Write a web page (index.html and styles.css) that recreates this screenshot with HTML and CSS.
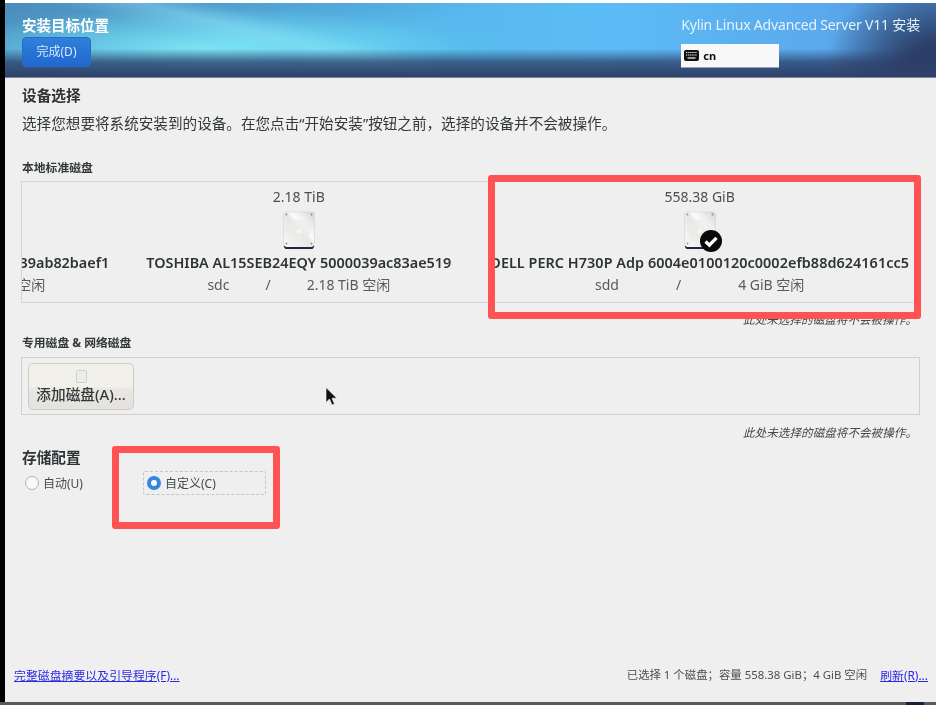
FILE: index.html
```html
<!DOCTYPE html>
<html lang="zh-CN">
<head>
<meta charset="utf-8">
<title>安装目标位置</title>
<link rel="stylesheet" href="styles.css">
</head>
<body>
<svg class="defs" width="0" height="0" aria-hidden="true">
  <defs>
    <linearGradient id="platter" x1="0" y1="1" x2="1" y2="0">
      <stop offset="0" stop-color="#fafaf9"/>
      <stop offset="0.5" stop-color="#e6e6e4"/>
      <stop offset="0.62" stop-color="#fbfbfa"/>
      <stop offset="1" stop-color="#d4d4d1"/>
    </linearGradient>
    <symbol id="disk" viewBox="0 0 32 38">
      <path d="M2 1h28l1.500 2v32.500l-1.500 2H2l-1.500-2V3z" fill="url(#platter)" stroke="#cfcfcc" stroke-width="0.500"/>
      <path d="M1 34.500l2 1.500h26l2-1.500v1.500l-1.500 2h-27L1 36z" fill="#25263d"/>
      <circle cx="16" cy="20" r="11.500" fill="#ebebe9" fill-opacity="0.700"/>
      <circle cx="16" cy="20" r="2.500" fill="#f6f6f5"/>
      <circle cx="3.500" cy="3.500" r="0.900" fill="#8c8c8c"/>
      <circle cx="28.500" cy="3.500" r="0.900" fill="#8c8c8c"/>
      <circle cx="3.500" cy="32.500" r="0.900" fill="#8c8c8c"/>
      <circle cx="28.500" cy="32.500" r="0.900" fill="#8c8c8c"/>
    </symbol>
  </defs>
</svg>
<div class="screen">
  <div class="edge"></div>
  <div class="window">
    <div class="topline"></div>
    <header class="banner">
      <div class="banner-left">
        <div class="banner-title">安装目标位置</div>
        <button class="done">完成(D)</button>
      </div>
      <div class="banner-right">
        <div class="product">Kylin Linux Advanced Server V11 安装</div>
        <div class="layout">
          <svg class="kbd" width="15" height="11" viewBox="0 0 15 11">
            <rect width="15" height="11" rx="2" fill="#111"/>
            <path d="M2 2.500h11M2 5h11" stroke="#f8f8f8" stroke-width="1.200" stroke-dasharray="1.300 .8"/>
            <path d="M3.500 8h8" stroke="#f8f8f8" stroke-width="1.200"/>
          </svg>
          <span>cn</span>
        </div>
      </div>
    </header>
    <main class="content">
      <h1 class="heading">设备选择</h1>
      <p class="desc">选择您想要将系统安装到的设备。在您点击“开始安装”按钮之前，选择的设备并不会被操作。</p>
      <h2 class="label first">本地标准磁盘</h2>
      <div class="disks">
        <div class="tile scrolled">
          <div class="size">2.18 TiB</div>
          <svg class="disk-icon"><use href="#disk"/></svg>
          <div class="name">TOSHIBA AL15SEB24EQY 50000039ab82baef1</div>
          <div class="info narrow"><span>sdb</span><span>/</span><span>2.18 TiB 空闲</span></div>
        </div>
        <div class="tile">
          <div class="size">2.18 TiB</div>
          <svg class="disk-icon"><use href="#disk"/></svg>
          <div class="name">TOSHIBA AL15SEB24EQY 5000039ac83ae519</div>
          <div class="info narrow"><span>sdc</span><span>/</span><span>2.18 TiB 空闲</span></div>
        </div>
        <div class="tile selected">
          <div class="size">558.38 GiB</div>
          <div class="icon-wrap">
            <svg class="disk-icon"><use href="#disk"/></svg>
            <svg class="check" width="22" height="22" viewBox="0 0 24 24">
              <circle cx="12" cy="12" r="12" fill="#0a0a0a"/>
              <path d="M6 12.500l4.200 4L18 8.500" fill="none" stroke="#fff" stroke-width="3.600"/>
            </svg>
          </div>
          <div class="name">DELL PERC H730P Adp 6004e0100120c0002efb88d624161cc5</div>
          <div class="info wide"><span>sdd</span><span>/</span><span>4 GiB 空闲</span></div>
        </div>
      </div>
      <div class="note">此处未选择的磁盘将不会被操作。</div>
      <h2 class="label second">专用磁盘 &amp; 网络磁盘</h2>
      <div class="special">
        <button class="add">
          <svg width="11" height="13" viewBox="0 0 11 13">
            <rect x="0.500" y="0.500" width="10" height="12" rx="1" fill="#ececea" stroke="#d0d0cc"/>
          </svg>
          <span>添加磁盘(A)...</span>
        </button>
      </div>
      <div class="note gap">此处未选择的磁盘将不会被操作。</div>
      <h1 class="heading storage">存储配置</h1>
      <div class="radios">
        <div class="radio"><span class="dot"></span>自动(U)</div>
        <div class="radio focus"><span class="dot on"></span>自定义(C)</div>
      </div>
    </main>
    <footer class="foot">
      <a class="link" href="#">完整磁盘摘要以及引导程序(F)...</a>
      <div class="summary">
        <span class="summary-text">已选择 1 个磁盘；容量 558.38 GiB；4 GiB 空闲</span>
        <a class="link" href="#">刷新(R)...</a>
      </div>
    </footer>
  </div>
  <div class="bottomline"><span class="taskmark"></span></div>
  <div class="mark mark-disk"></div>
  <div class="mark mark-radio"></div>
  <svg class="pointer" width="12" height="19" viewBox="0 0 12 19">
    <path d="M1 0.500v15l3.500-3.500 2.500 6 2.500-1-2.500-5.800h4.800z" fill="#111" stroke="#fff" stroke-width="0.600"/>
  </svg>
</div>
</body>
</html>
```
FILE: styles.css
```css
* { box-sizing: border-box; }
html, body { margin: 0; padding: 0; }
body {
  width: 936px;
  height: 705px;
  overflow: hidden;
  background: #efefef;
  font-family: "Noto Sans", "Noto Sans CJK SC", sans-serif;
  color: #2e3436;
}
.defs { position: absolute; }
.screen {
  position: relative;
  width: 936px;
  height: 705px;
  display: grid;
  grid-template-columns: 5px 1fr;
  grid-template-rows: 702px 3px;
}
.edge { background: #000; }
.window {
  display: flex;
  flex-direction: column;
  min-width: 0;
  background: #efefef;
  filter: blur(0.35px);
}
.topline { height: 3px; background: #fff; flex: none; }
.banner {
  flex: none;
  height: 75px;
  display: flex;
  justify-content: space-between;
  padding: 12px 16px 0 17px;
  border-bottom: 1px solid #7b8598;
  background:
    linear-gradient(180deg, rgba(44,62,104,0) 62%, rgba(44,62,104,.75) 80%, #2e4169 100%),
    radial-gradient(ellipse 110px 90px at 100% 85%, #2c3f68 25%, rgba(44,63,104,0) 100%),
    radial-gradient(ellipse 260px 40px at 200px 45px, rgba(130,235,248,.85), rgba(130,235,248,0) 100%),
    linear-gradient(194deg, rgba(150,225,250,0) 59%, rgba(150,225,250,.4) 65%, rgba(150,225,250,0) 72%),
    linear-gradient(165deg, rgba(72,118,170,.7) 0, rgba(72,118,170,0) 130px),
    linear-gradient(12deg, rgba(90,220,240,.4) 30%, rgba(90,220,240,0) 55%),
    linear-gradient(90deg, #4fa9dc 0, #56b7ea 40%, #5cbcf5 65%, #5aa9ec 88%, #4d8ccf 100%);
}
.banner-left, .banner-right { display: flex; flex-direction: column; align-items: flex-start; }
.banner-title {
  height: 20px;
  line-height: 20px;
  font-size: 14.500px;
  font-weight: 700;
  color: #fff;
}
.done {
  margin-top: 2px;
  width: 69px;
  height: 30px;
  padding: 0;
  border: 1px solid #2a6cc4;
  border-radius: 4px;
  background: linear-gradient(180deg, #2f80dc, #2068d0);
  color: #d6e8fb;
  font: 400 12px/1 "Noto Sans", "Noto Sans CJK SC", sans-serif;
}
.product {
  height: 20px;
  line-height: 20px;
  font-size: 14px;
  letter-spacing: -0.170px;
  color: #e6f3fc;
  white-space: nowrap;
}
.layout {
  margin-top: 9px;
  width: 98px;
  height: 24px;
  display: flex;
  align-items: center;
  gap: 4px;
  padding-left: 3px;
  background: #f8f8f8;
  border-bottom: 1px solid #9aa3b4;
  font-size: 11px;
  font-weight: 700;
  color: #111;
}
.content {
  flex: 1;
  display: flex;
  flex-direction: column;
  padding: 7px 16px 0 17px;
  min-height: 0;
}
.heading {
  margin: 0;
  height: 20px;
  line-height: 20px;
  font-size: 14.670px;
  font-weight: 700;
  color: #2e3436;
}
.desc {
  margin: 8px 0 0;
  height: 20px;
  line-height: 20px;
  font-size: 14.600px;
  color: #33383a;
  white-space: nowrap;
}
.label {
  margin: 7px 0 0;
  height: 16px;
  line-height: 16px;
  font-size: 11.800px;
  font-weight: 700;
  color: #33383a;
}
.label.first { margin-top: 26px; }
.label.second { margin-top: 6px; }
.disks {
  margin: 6px 0 0 -1px;
  height: 122px;
  border: 1px solid #d6d6d6;
  display: flex;
  justify-content: flex-end;
  gap: 39px;
  padding: 5px 10px 0 0;
  overflow: hidden;
}
.tile {
  flex: none;
  display: flex;
  flex-direction: column;
  align-items: center;
}
.tile.scrolled { margin-right: -2px; }
.size, .name, .info {
  height: 20px;
  line-height: 20px;
  white-space: nowrap;
}
.size { font-size: 14px; color: #4a4f51; }
.disk-icon { display: block; width: 32px; height: 38px; margin-top: 4px; }
.icon-wrap { position: relative; }
.check { position: absolute; left: 16px; top: 23px; }
.name {
  margin-top: 4px;
  font-size: 14.400px;
  font-weight: 600;
  color: #2e3436;
}
.selected .name { letter-spacing: 0.050px; }
.info {
  margin-top: 2px;
  display: flex;
  justify-content: center;
  font-size: 14px;
  color: #555a5c;
}
.info.narrow { gap: 36px; }
.info.wide { gap: 57px; }
.note {
  margin-top: 9px;
  height: 16px;
  line-height: 16px;
  text-align: right;
  padding-right: 3px;
  font-size: 11.600px;
  font-style: italic;
  color: #45494b;
}
.note.gap { margin-top: 10px; }
.special {
  margin: 7px 0 0 -1px;
  height: 58px;
  border: 1px solid #d3cfcf;
  padding: 5px 6px;
}
.add {
  width: 106px;
  height: 47px;
  padding: 6px 0 0;
  display: flex;
  flex-direction: column;
  align-items: center;
  gap: 1px;
  border: 1px solid #cfcac4;
  border-radius: 5px;
  background: linear-gradient(180deg, #f2f0ea 0, #f2f0ea 50%, #e9e6e3 55%, #e4e2df 100%);
  font: 500 14.670px/20px "Noto Sans", "Noto Sans CJK SC", sans-serif;
  color: #33383a;
  white-space: nowrap;
}
.heading.storage { margin-top: 6px; }
.radios {
  margin: 4px 0 0 3px;
  display: flex;
  gap: 60px;
}
.radio {
  height: 24px;
  display: flex;
  align-items: center;
  gap: 4px;
  font-size: 12px;
  color: #45494b;
}
.radio.focus {
  width: 123px;
  padding-left: 3px;
  border: 1px dashed #c4c4c4;
  border-radius: 2px;
}
.dot {
  flex: none;
  width: 14px;
  height: 14px;
  border-radius: 50%;
  border: 1px solid #b8b4ac;
  background: #f8f8f6;
}
.dot.on { border: 4px solid #3584e4; background: #fff; }
.foot {
  flex: none;
  height: 20px;
  margin-bottom: 18px;
  display: flex;
  justify-content: space-between;
  align-items: center;
  padding: 0 8px 0 9px;
  font-size: 11.900px;
  color: #4a4f51;
  white-space: nowrap;
}
.summary { display: flex; gap: 13px; }
.summary-text { font-size: 11.400px; }
.link { color: #2a2ae6; text-decoration: underline; }
.bottomline {
  grid-column: 1 / -1;
  background: #5a5a5a;
  display: flex;
  justify-content: flex-end;
  padding-right: 12px;
}
.taskmark { width: 18px; background: #16233f; }
.mark {
  position: absolute;
  border: 7px solid #ff5252;
  border-radius: 3px;
}
.mark-disk { left: 488px; top: 175px; width: 433px; height: 144px; }
.mark-radio { left: 112px; top: 446px; width: 168px; height: 83px; }
.pointer { position: absolute; left: 325px; top: 387px; }
```
